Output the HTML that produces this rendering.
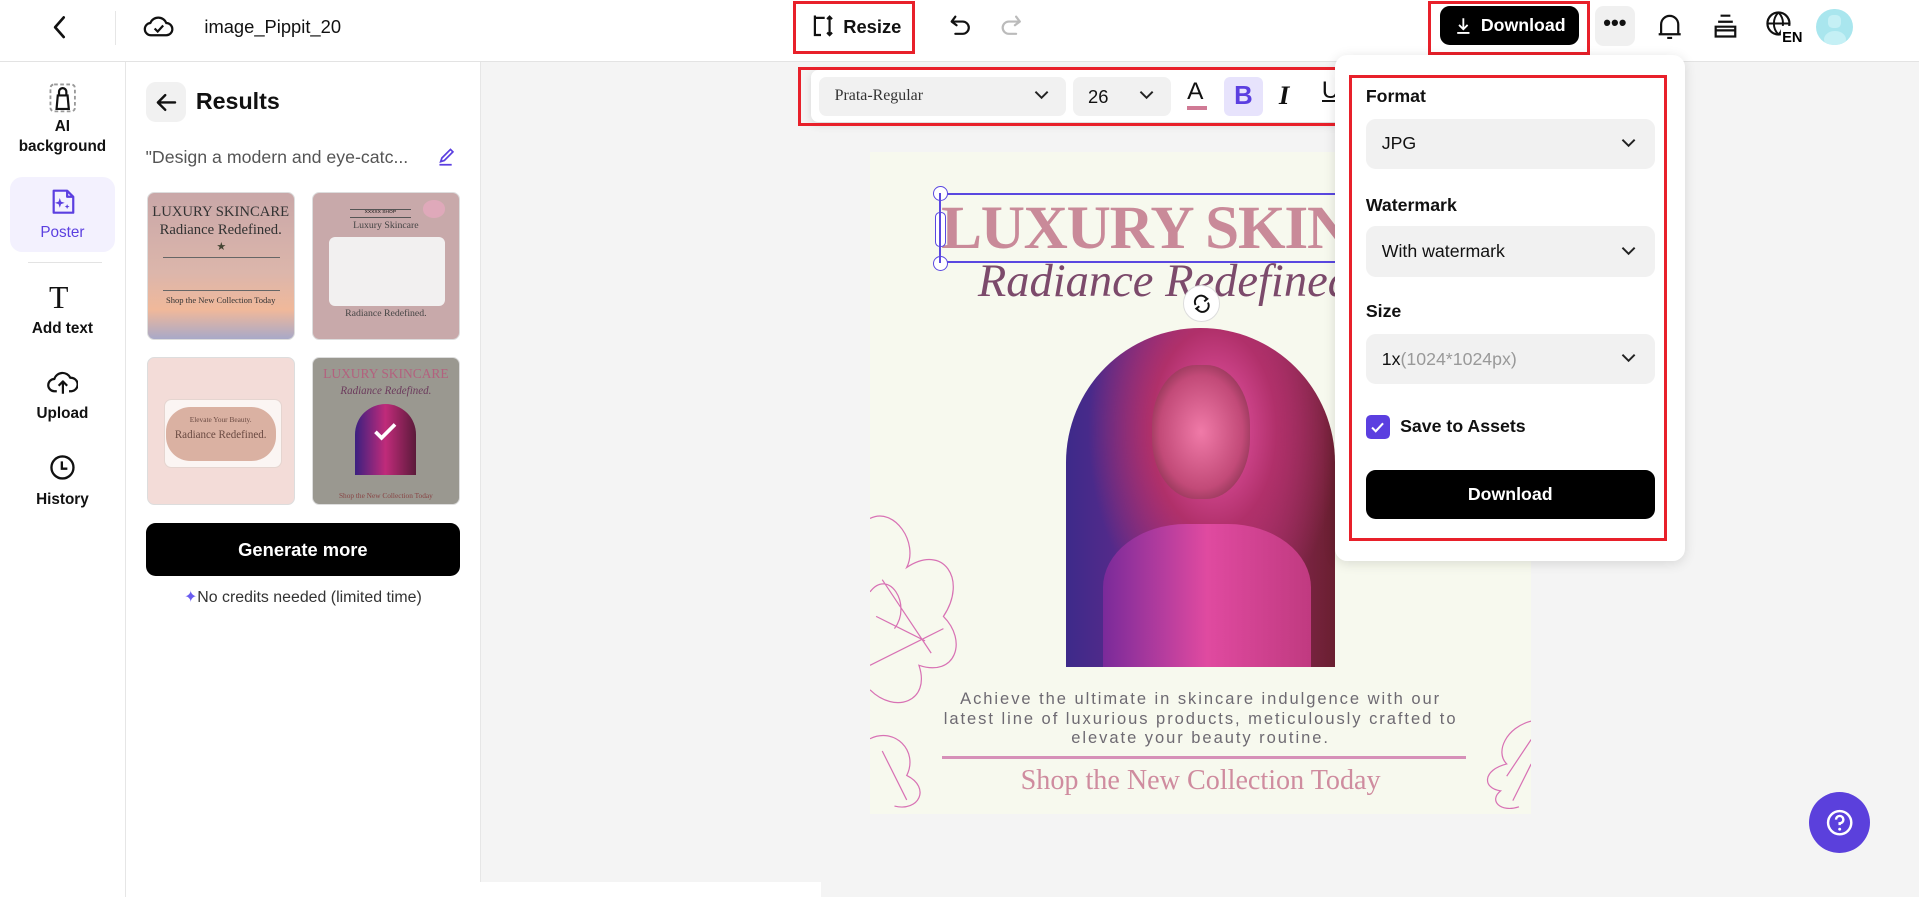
<!DOCTYPE html>
<html><head><meta charset="utf-8">
<style>
html,body{margin:0;padding:0;width:1919px;height:897px;overflow:hidden;background:#f4f4f4}
#w{position:absolute;left:0;top:0;width:1568px;height:733px;zoom:1.22385;font-family:"Liberation Sans",sans-serif;color:#111;background:#f4f4f4;overflow:hidden}
.a{position:absolute}
.red{position:absolute;border:3px solid #e8202a;box-sizing:border-box}
.lbl{font-size:12.5px;font-weight:bold;text-align:center;width:102px;left:0;line-height:16px}
.sel{position:absolute;left:1116px;width:236px;height:41px;background:#f1f1f1;border-radius:8px;font-size:14.5px}
.sel span{position:absolute;left:13px;top:12px}
.chev{position:absolute;right:14px;top:14px}
.thumb{position:absolute;width:121px;height:121px;border-radius:6px;overflow:hidden;border:1px solid #ddd;box-sizing:border-box}
</style></head><body><div id="w">
<!-- top bar -->
<div class="a" style="left:0;top:0;width:1568px;height:50px;background:#fff;border-bottom:1px solid #e3e3e3"></div>
<svg class="a" style="left:40px;top:12px" width="18" height="20" viewBox="0 0 18 20"><path d="M12 2 L5 10 L12 18" fill="none" stroke="#111" stroke-width="2.2" stroke-linecap="round" stroke-linejoin="round"/></svg>
<div class="a" style="left:94px;top:9px;width:1px;height:28px;background:#e6e6e6"></div>
<svg class="a" style="left:117px;top:10px" width="26" height="24" viewBox="0 0 26 24"><path d="M7 19 H19 A5 5 0 0 0 19 9 A7 7 0 0 0 6 9 A5 5 0 0 0 7 19Z" fill="none" stroke="#111" stroke-width="1.8"/><path d="M9.5 13.5 L12 16 L16.5 11" fill="none" stroke="#111" stroke-width="1.8"/></svg>
<div class="a" style="left:167px;top:13px;font-size:15px">image_Pippit_20</div>
<div class="red" style="left:648px;top:1px;width:100px;height:43px"></div>
<svg class="a" style="left:662px;top:11px" width="20" height="22" viewBox="0 0 20 22"><path d="M4 4 H12 M4 4 V18 H9 M16 7 V18 M16 3 V7 M14 5 L16 3 L18 5 M14 16 L16 18 L18 16 M4 2 V6" fill="none" stroke="#111" stroke-width="1.8"/></svg>
<div class="a" style="left:689px;top:13px;font-size:15px;font-weight:bold">Resize</div>
<svg class="a" style="left:775px;top:11px" width="20" height="20" viewBox="0 0 20 20"><path d="M6 3 L3 7 L7 10 M3.5 7 H12 A5 5 0 0 1 12 17 H6" fill="none" stroke="#111" stroke-width="1.8" stroke-linecap="round" stroke-linejoin="round"/></svg>
<svg class="a" style="left:816px;top:11px" width="20" height="20" viewBox="0 0 20 20"><path d="M14 3 L17 7 L13 10 M16.5 7 H8 A5 5 0 0 0 8 17 H14" fill="none" stroke="#bbb" stroke-width="1.8" stroke-linecap="round" stroke-linejoin="round"/></svg>
<div class="red" style="left:1167px;top:1px;width:132px;height:44px"></div>
<div class="a" style="left:1177px;top:5px;width:113px;height:32px;background:#000;border-radius:8px;color:#fff;font-size:14.5px;font-weight:bold;line-height:32px"><svg class="a" style="left:13px;top:9px" width="12" height="14" viewBox="0 0 12 14"><path d="M6 1 V10 M2.5 6.5 L6 10 L9.5 6.5 M1 13 H11" fill="none" stroke="#fff" stroke-width="1.5"/></svg><span style="position:absolute;left:33px">Download</span></div>
<div class="a" style="left:1303px;top:5px;width:33px;height:33px;background:#f0f0f0;border-radius:7px;font-size:18px;font-weight:bold;text-align:center;line-height:28px">•••</div>
<svg class="a" style="left:1352px;top:9px" width="24" height="26" viewBox="0 0 24 26"><path d="M5 19 V11 A7 7 0 0 1 19 11 V19 Z M3 19 H21 M10 22 H14" fill="none" stroke="#111" stroke-width="1.8" stroke-linejoin="round"/></svg>
<svg class="a" style="left:1399px;top:10px" width="22" height="24" viewBox="0 0 22 24"><path d="M7 3 H15 M5 8 H17 M3 12 H19 V20 H3 Z M3 15 H19" fill="none" stroke="#111" stroke-width="1.8"/></svg>
<svg class="a" style="left:1442px;top:8px" width="32" height="28" viewBox="0 0 32 28"><circle cx="11" cy="11" r="9" fill="none" stroke="#111" stroke-width="1.8"/><path d="M2 11 H20 M11 2 C6 7 6 15 11 20 M11 2 C16 7 16 15 11 20" fill="none" stroke="#111" stroke-width="1.6"/><rect x="13" y="13" width="18" height="14" fill="#fff"/><text x="14" y="26" font-size="12" font-weight="bold" font-family="Liberation Sans">EN</text></svg>
<div class="a" style="left:1484px;top:7px;width:30px;height:30px;border-radius:50%;background:#a9e6ee;overflow:hidden"><div class="a" style="left:10px;top:5px;width:10px;height:11px;background:#c5f0f5;border-radius:4px"></div><div class="a" style="left:6px;top:18px;width:18px;height:14px;background:#c5f0f5;border-radius:50%"></div></div>
<!-- left sidebar -->
<div class="a" style="left:0;top:51px;width:102px;height:682px;background:#fff;border-right:1px solid #e6e6e6"></div>
<svg class="a" style="left:39px;top:67px" width="24" height="26" viewBox="0 0 24 26"><rect x="2" y="2" width="20" height="22" rx="3" fill="none" stroke="#999" stroke-width="1.5" stroke-dasharray="3 2"/><path d="M7 22 L8 11 H16 L17 22 Z M9 11 V8 A3 3 0 0 1 15 8 V11" fill="none" stroke="#111" stroke-width="1.8"/></svg>
<div class="a lbl" style="top:96px">AI<br>background</div>
<div class="a" style="left:8px;top:145px;width:86px;height:61px;background:#f3f1fe;border-radius:10px"></div>
<svg class="a" style="left:41px;top:153px" width="22" height="24" viewBox="0 0 22 24"><path d="M3 3 H14 L19 8 V21 H3 Z M14 3 V8 H19" fill="none" stroke="#5b3fe0" stroke-width="1.8" stroke-linejoin="round"/><path d="M8 9 L9 12 L12 13 L9 14 L8 17 L7 14 L4 13 L7 12Z M14 14 l.6 1.4 1.4.6-1.4.6-.6 1.4-.6-1.4-1.4-.6 1.4-.6z" fill="#5b3fe0"/></svg>
<div class="a lbl" style="top:182px;color:#5b3fe0;font-weight:normal">Poster</div>
<div class="a" style="left:23px;top:214px;width:60px;height:1px;background:#e3e3e3"></div>
<div class="a" style="left:40px;top:229px;font-size:26px;font-family:'Liberation Serif',serif">T</div>
<div class="a lbl" style="top:261px">Add text</div>
<svg class="a" style="left:38px;top:301px" width="26" height="24" viewBox="0 0 26 24"><path d="M8 19 H6 A5 5 0 0 1 6 9 A7 7 0 0 1 19 8 A5 5 0 0 1 20 19 H18 M13 21 V11 M9.5 14.5 L13 11 L16.5 14.5" fill="none" stroke="#111" stroke-width="1.8" stroke-linejoin="round"/></svg>
<div class="a lbl" style="top:330px">Upload</div>
<svg class="a" style="left:40px;top:371px" width="22" height="22" viewBox="0 0 22 22"><circle cx="11" cy="11" r="9" fill="none" stroke="#111" stroke-width="1.9"/><path d="M10.5 6 V12 H15" fill="none" stroke="#111" stroke-width="1.9"/></svg>
<div class="a lbl" style="top:400px">History</div>
<!-- panel -->
<div class="a" style="left:103px;top:51px;width:290px;height:682px;background:#fff;border-right:1px solid #e6e6e6;box-sizing:border-box"></div>
<div class="a" style="left:119px;top:67px;width:33px;height:33px;background:#f1f1f1;border-radius:8px"></div>
<svg class="a" style="left:125px;top:73px" width="22" height="22" viewBox="0 0 22 22"><path d="M18 11 H4 M10 5 L4 11 L10 17" fill="none" stroke="#111" stroke-width="2" stroke-linecap="round" stroke-linejoin="round"/></svg>
<div class="a" style="left:160px;top:72px;font-size:19px;font-weight:bold">Results</div>
<div class="a" style="left:119px;top:120px;font-size:14.5px;color:#555">"Design a modern and eye-catc...</div>
<svg class="a" style="left:357px;top:120px" width="16" height="16" viewBox="0 0 16 16"><path d="M3 12 L4 9 L11 2 L13 4 L6 11 Z M2 14.5 H12" fill="none" stroke="#5b3fe0" stroke-width="1.4"/></svg>
<div class="thumb" style="left:120px;top:157px;background:linear-gradient(#c9a7a8,#dcb6ab 55%,#f0b89a 80%,#a8a9c8)">
<div class="a" style="left:0;width:119px;top:8px;text-align:center;font-family:'Liberation Serif',serif;font-size:12px;color:#333;line-height:15px">LUXURY SKINCARE<br>Radiance Redefined.</div>
<div class="a" style="left:56px;top:38px;font-size:9px;color:#443">★</div>
<div class="a" style="left:12px;top:52px;width:96px;height:1px;background:#666"></div>
<div class="a" style="left:12px;top:79px;width:96px;height:1px;background:#666"></div>
<div class="a" style="left:0;width:119px;top:83px;text-align:center;font-family:'Liberation Serif',serif;font-size:7px;color:#333">Shop the New Collection Today</div></div>
<div class="thumb" style="left:255px;top:157px;background:#c8a9aa">
<div class="a" style="left:30px;top:13px;width:50px;height:6px;border-top:1px solid #555;border-bottom:1px solid #555;font-size:4px;text-align:center">XXXXX SHOP</div>
<div class="a" style="left:0;width:119px;top:22px;text-align:center;font-family:'Liberation Serif',serif;font-size:8px;color:#444">Luxury Skincare</div>
<div class="a" style="left:13px;top:36px;width:95px;height:56px;background:#f2f0f0;border-radius:5px"></div>
<div class="a" style="left:0;width:119px;top:94px;text-align:center;font-family:'Liberation Serif',serif;font-size:8px;color:#444">Radiance Redefined.</div>
<div class="a" style="left:90px;top:6px;width:18px;height:14px;border-radius:50%;background:#e8a9c0;opacity:.7"></div></div>
<div class="thumb" style="left:120px;top:292px;background:#f3dcd8">
<div class="a" style="left:13px;top:33px;width:95px;height:55px;background:#fbf5f3;border-radius:6px;border:1px solid #e5d5d0"></div>
<div class="a" style="left:15px;top:40px;width:90px;height:44px;background:#dab1a2;border-radius:20px"></div>
<div class="a" style="left:0;width:119px;top:44px;text-align:center;font-family:'Liberation Serif',serif;font-size:9px;color:#6a4a42;line-height:12px"><span style="font-size:6px">Elevate Your Beauty.</span><br>Radiance Redefined.</div></div>
<div class="thumb" style="left:255px;top:292px;background:#9a9890">
<div class="a" style="left:0;width:119px;top:6px;text-align:center;font-family:'Liberation Serif',serif;font-size:11px;color:#b3617e;line-height:13px">LUXURY SKINCARE<br><i style="color:#6b3a5c;font-size:9px">Radiance Redefined.</i></div>
<div class="a" style="left:34px;top:37px;width:50px;height:58px;border-radius:25px 25px 0 0;background:linear-gradient(90deg,#3b2080,#c02b7a,#5b1a3a)"></div>
<svg class="a" style="left:49px;top:52px" width="20" height="16" viewBox="0 0 20 16"><path d="M2 8 L7 13 L18 2" fill="none" stroke="#fff" stroke-width="3"/></svg>
<div class="a" style="left:0;width:119px;top:108px;text-align:center;font-family:'Liberation Serif',serif;font-size:6px;color:#844">Shop the New Collection Today</div></div>
<div class="a" style="left:119px;top:427px;width:257px;height:44px;background:#000;border-radius:8px;color:#fff;font-weight:bold;font-size:15px;text-align:center;line-height:44px">Generate more</div>
<div class="a" style="left:119px;top:480px;width:257px;text-align:center;font-size:13px;color:#333"><span style="color:#6a5cf0">✦</span>No credits needed (limited time)</div>
<div class="a" style="left:381px;top:721px;width:290px;height:12px;background:#fff"></div>
<!-- poster -->
<div class="a" style="left:711px;top:124px;width:540px;height:541px;background:#f7f9ee;overflow:hidden">
<div class="a" style="left:58px;top:34px;font-family:'Liberation Serif',serif;font-weight:bold;font-size:50px;color:#c98a99;white-space:nowrap;letter-spacing:-1px">LUXURY SKINCARE</div>
<div class="a" style="left:88px;top:84px;font-family:'Liberation Serif',serif;font-style:italic;font-size:38px;color:#7c4a6b;white-space:nowrap">Radiance Redefined.</div>
<div class="a" style="left:160px;top:144px;width:220px;height:277px;border-radius:110px 110px 0 0;background:radial-gradient(ellipse at 55% 30%,#f05ab0 0%,#b0306a 30%,transparent 60%),linear-gradient(90deg,#3d2a8a 0%,#6a2a8a 35%,#a03070 60%,#6a1f30 100%);overflow:hidden">
<div class="a" style="left:70px;top:30px;width:80px;height:110px;border-radius:45%;background:radial-gradient(#f07aa8,#c24a78 60%,#5a2030)"></div>
<div class="a" style="left:30px;top:160px;width:170px;height:130px;border-radius:40% 40% 0 0;background:linear-gradient(90deg,#7a2a9a,#e04aa0,#c03a80)"></div></div>
<div class="a" style="left:0;width:540px;top:439px;text-align:center;font-size:13.5px;letter-spacing:1.6px;color:#6e6a72;line-height:16px">Achieve the ultimate in skincare indulgence with our<br>latest line of luxurious products, meticulously crafted to<br>elevate your beauty routine.</div>
<div class="a" style="left:59px;top:494px;width:428px;height:2px;background:#d690b8"></div>
<div class="a" style="left:0;width:540px;top:501px;text-align:center;font-family:'Liberation Serif',serif;font-size:23px;color:#cf8c9f">Shop the New Collection Today</div>
<svg class="a" style="left:0;top:280px" width="90" height="261" viewBox="0 0 90 261" fill="none" stroke="#d872b4" stroke-width="1"><path d="M0 20 C20 10 40 40 30 60 C60 40 80 70 60 100 C80 120 70 150 40 140 C50 170 20 180 0 160"/><path d="M0 80 C15 60 35 90 20 110 M10 70 L50 130 M5 100 L45 120 M0 140 L60 110"/><path d="M0 200 C20 190 40 210 30 230 C50 240 40 260 20 255 M10 210 L30 250"/></svg>
<svg class="a" style="left:490px;top:460px" width="50" height="81" viewBox="0 0 50 81" fill="none" stroke="#d872b4" stroke-width="1"><path d="M50 5 C30 10 20 30 30 40 C10 45 10 60 25 62 C15 70 25 80 40 75 M50 20 L30 50 M50 40 L35 70"/></svg>
</div>
<!-- selection -->
<div class="a" style="left:768px;top:158px;width:330px;height:57px;border-top:2px solid #5a48e0;border-bottom:2px solid #5a48e0;box-sizing:border-box"></div>
<div class="a" style="left:762px;top:152px;width:11px;height:11px;border:1.5px solid #5a48e0;border-radius:50%;background:#fff"></div>
<div class="a" style="left:762px;top:209px;width:11px;height:11px;border:1.5px solid #5a48e0;border-radius:50%;background:#fff"></div>
<div class="a" style="left:764px;top:173px;width:7px;height:27px;border:1.5px solid #5a48e0;border-radius:4px;background:#fff"></div>
<div class="a" style="left:767px;top:158px;width:2px;height:57px;background:#5a48e0"></div>
<div class="a" style="left:967px;top:233px;width:30px;height:30px;border-radius:50%;background:#fff;border:1px solid #ddd;box-sizing:border-box"></div>
<svg class="a" style="left:974px;top:240px" width="16" height="16" viewBox="0 0 16 16"><path d="M3 9 A5 5 0 0 1 12 4 M13 7 A5 5 0 0 1 4 12 M10 2 L12.5 4 L10 6 M6 10 L3.5 12 L6 14" fill="none" stroke="#111" stroke-width="1.6"/></svg>
<!-- font toolbar -->
<div class="a" style="left:663px;top:57px;width:440px;height:43px;background:#fff;border-radius:6px;box-shadow:0 2px 8px rgba(0,0,0,.12)"></div>
<div class="a" style="left:669px;top:63px;width:202px;height:32px;background:#f1f1f1;border-radius:6px"></div>
<div class="a" style="left:682px;top:71px;font-family:'Liberation Serif',serif;font-size:13px;color:#333">Prata-Regular</div>
<svg class="a" style="left:844px;top:72px" width="14" height="12" viewBox="0 0 14 12"><path d="M2 3 L7 8 L12 3" fill="none" stroke="#222" stroke-width="1.6"/></svg>
<div class="a" style="left:877px;top:63px;width:80px;height:32px;background:#f1f1f1;border-radius:6px"></div>
<div class="a" style="left:889px;top:70px;font-size:15px">26</div>
<svg class="a" style="left:930px;top:72px" width="14" height="12" viewBox="0 0 14 12"><path d="M2 3 L7 8 L12 3" fill="none" stroke="#222" stroke-width="1.6"/></svg>
<div class="a" style="left:970px;top:64px;font-size:20px">A</div>
<div class="a" style="left:970px;top:87px;width:16px;height:3px;background:#d07a95"></div>
<div class="a" style="left:1000px;top:63px;width:32px;height:32px;background:#e7e3fc;border-radius:5px;color:#5b3fe0;font-size:21px;font-weight:bold;text-align:center;line-height:32px">B</div>
<div class="a" style="left:1045px;top:65px;font-size:22px;font-style:italic;font-family:'Liberation Serif',serif;font-weight:bold">I</div>
<div class="a" style="left:1080px;top:63px;width:13px;height:30px;overflow:hidden;font-size:20px;text-decoration:underline">U</div>
<div class="red" style="left:652px;top:55px;width:445px;height:48px"></div>
<!-- dropdown -->
<div class="a" style="left:1091px;top:45px;width:286px;height:413px;background:#fff;border-radius:10px;box-shadow:0 2px 10px rgba(0,0,0,.12)"></div>
<div class="red" style="left:1102px;top:61px;width:260px;height:381px"></div>
<div class="a" style="left:1116px;top:70px;font-size:14.5px;font-weight:bold">Format</div>
<div class="sel" style="top:97px"><span>JPG</span><svg class="chev" width="14" height="12" viewBox="0 0 14 12"><path d="M2 3 L7 8 L12 3" fill="none" stroke="#222" stroke-width="1.6"/></svg></div>
<div class="a" style="left:1116px;top:159px;font-size:14.5px;font-weight:bold">Watermark</div>
<div class="sel" style="top:185px"><span>With watermark</span><svg class="chev" width="14" height="12" viewBox="0 0 14 12"><path d="M2 3 L7 8 L12 3" fill="none" stroke="#222" stroke-width="1.6"/></svg></div>
<div class="a" style="left:1116px;top:246px;font-size:14.5px;font-weight:bold">Size</div>
<div class="sel" style="top:273px"><span>1x<span style="position:static;color:#999">(1024*1024px)</span></span><svg class="chev" width="14" height="12" viewBox="0 0 14 12"><path d="M2 3 L7 8 L12 3" fill="none" stroke="#222" stroke-width="1.6"/></svg></div>
<div class="a" style="left:1116px;top:339px;width:20px;height:20px;background:#5b3fe0;border-radius:4px"></div>
<svg class="a" style="left:1119px;top:342px" width="14" height="14" viewBox="0 0 14 14"><path d="M2.5 7 L5.5 10 L11.5 3.5" fill="none" stroke="#fff" stroke-width="1.7"/></svg>
<div class="a" style="left:1144px;top:340px;font-size:14.5px;font-weight:bold">Save to Assets</div>
<div class="a" style="left:1116px;top:384px;width:236px;height:40px;background:#000;border-radius:8px;color:#fff;font-weight:bold;font-size:14.5px;text-align:center;line-height:40px">Download</div>
<!-- help -->
<div class="a" style="left:1478px;top:647px;width:50px;height:50px;border-radius:50%;background:#5b40dc"></div>
<svg class="a" style="left:1491px;top:660px" width="24" height="24" viewBox="0 0 24 24"><circle cx="12" cy="12" r="9.5" fill="none" stroke="#fff" stroke-width="2"/><path d="M9 9.5 A3 3 0 1 1 12 12.5 V14" fill="none" stroke="#fff" stroke-width="2"/><circle cx="12" cy="17.3" r="1.2" fill="#fff"/></svg>
</div></body></html>
